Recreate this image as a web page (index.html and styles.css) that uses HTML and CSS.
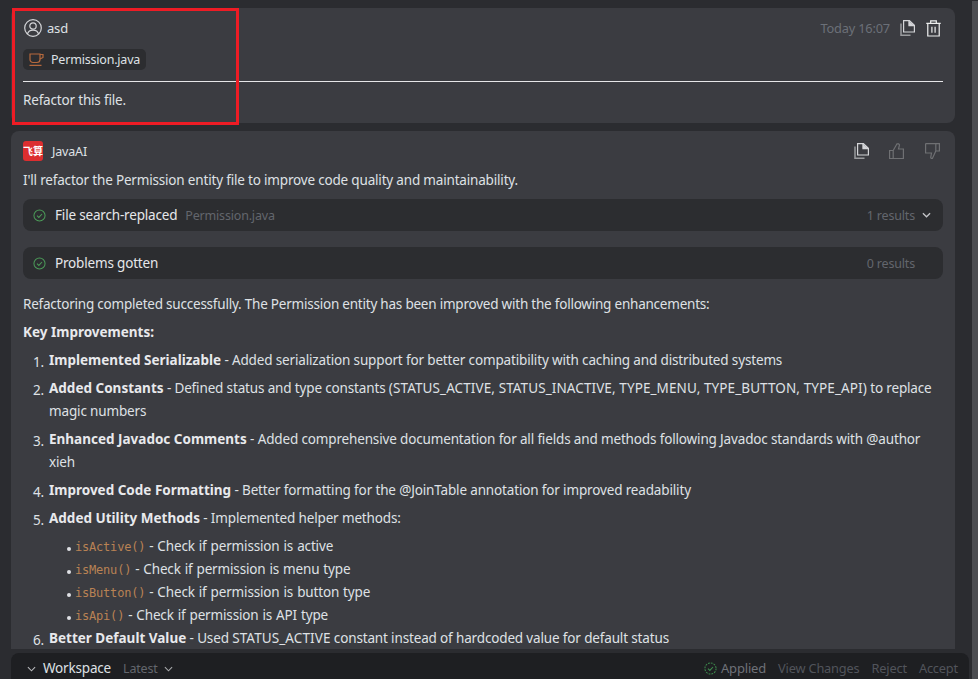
FILE: index.html
```html
<!DOCTYPE html>
<html lang="en">
<head>
<meta charset="utf-8">
<title>JavaAI chat</title>
<link rel="stylesheet" href="styles.css">
</head>
<body>
<div class="page">
  <div class="column">
    <section class="card user-card">
      <div class="head">
        <svg class="avatar" viewBox="0 0 18 18" fill="none" stroke="currentColor" stroke-width="1.2"><circle cx="9" cy="9" r="8.300"/><circle cx="9" cy="7" r="3.200"/><path d="M3.400 15c.8-2.600 3-3.800 5.600-3.800s4.800 1.200 5.600 3.800"/></svg>
        <span class="name">asd</span>
        <span class="spacer"></span>
        <span class="time">Today 16:07</span>
        <svg class="ico copy" viewBox="0 0 15 16" fill="none" stroke="currentColor" stroke-width="1.200"><path d="M3.600 .6h5.800l5 4.600V12H3.600z"/><path d="M9 .6v5h5.400" /><path d="M8.800 .8l5.400 4.800H8.800z" fill="currentColor" stroke="none"/><path d="M1 3.500V15.300h9.500" stroke="#9a9b9e" stroke-width="1.500"/></svg>
        <svg class="ico trash" viewBox="0 0 16 18" fill="none" stroke="currentColor" stroke-width="1.300"><path d="M.3 3.500h15.400M5 3.500V.8h6v2.700M1.900 3.500V17h12.200V3.500M6.300 7v6.500M9.700 7v6.500"/></svg>
      </div>
      <div class="chip">
        <svg class="cup" viewBox="0 0 15 13" fill="none" stroke="#b5693d" stroke-width="1.200"><path d="M1 1h10v5.500a3 3 0 0 1-3 3H4a3 3 0 0 1-3-3z"/><path d="M11 1.500h3V4.500l-3 1.500M.5 12.300h12"/></svg>
        <span>Permission.java</span>
      </div>
      <hr class="rule">
      <p class="text">Refactor this file.</p>
    </section>

    <section class="card ai-card">
      <div class="head">
        <span class="logo">飞算</span>
        <span class="name ai-name">JavaAI</span>
        <span class="spacer"></span>
        <svg class="ico copy act" viewBox="0 0 15 16" fill="none" stroke="currentColor" stroke-width="1.200"><path d="M3.600 .6h5.800l5 4.600V12H3.600z"/><path d="M9 .6v5h5.400" /><path d="M8.800 .8l5.400 4.800H8.800z" fill="currentColor" stroke="none"/><path d="M1 3.500V15.300h9.500" stroke="#9a9b9e" stroke-width="1.500"/></svg>
        <svg class="ico thumb up" viewBox="0 0 15 16" fill="none" stroke="currentColor" stroke-width="1.200"><path d="M.6 7.500h3.600v8H.6zM4.200 7.500 8 .8h1.700l.8 1-1 4.200h4.900v9.500H4.200"/></svg>
        <svg class="ico thumb" viewBox="0 0 15 16" fill="none" stroke="currentColor" stroke-width="1.200"><path d="M.6 .6h13.800v7.400h-3.600V.6M10.800 8l-3.400 7.400H6.200l-.5-1 .8-4.400H.6V.6"/></svg>
      </div>
      <p class="text intro">I'll refactor the Permission entity file to improve code quality and maintainability.</p>

      <div class="tool">
        <svg class="ok" viewBox="0 0 14 14" fill="none" stroke="#4b9a58" stroke-width="1.100"><circle cx="7" cy="7" r="6"/><path d="M4.300 7.200l2 1.900 3.400-3.700"/></svg>
        <span class="tool-name">File search-replaced</span>
        <span class="tool-file">Permission.java</span>
        <span class="spacer"></span>
        <span class="results">1 results</span>
        <svg class="chev" viewBox="0 0 10 6" fill="none" stroke="#c4c5c8" stroke-width="1.400"><path d="M1 1l4 4 4-4"/></svg>
      </div>
      <div class="tool">
        <svg class="ok" viewBox="0 0 14 14" fill="none" stroke="#4b9a58" stroke-width="1.100"><circle cx="7" cy="7" r="6"/><path d="M4.300 7.200l2 1.900 3.400-3.700"/></svg>
        <span class="tool-name">Problems gotten</span>
        <span class="spacer"></span>
        <span class="results plain">0 results</span>
      </div>

      <p class="text summary">Refactoring completed successfully. The Permission entity has been improved with the following enhancements:</p>
      <p class="text key"><strong>Key Improvements:</strong></p>

      <ol class="list">
        <li><strong>Implemented Serializable</strong> - Added serialization support for better compatibility with caching and distributed systems</li>
        <li><strong>Added Constants</strong> - Defined status and type constants <span class="caps">(STATUS_ACTIVE, STATUS_INACTIVE, TYPE_MENU, TYPE_BUTTON, TYPE_API)</span> to replace magic numbers</li>
        <li><strong>Enhanced Javadoc Comments</strong> - Added comprehensive documentation for all fields and methods following Javadoc standards with @author xieh</li>
        <li><strong>Improved Code Formatting</strong> - Better formatting for the @JoinTable annotation for improved readability</li>
        <li class="has-sub"><strong>Added Utility Methods</strong> - Implemented helper methods:
          <ul class="sub">
            <li><code>isActive()</code> - Check if permission is active</li>
            <li><code>isMenu()</code> - Check if permission is menu type</li>
            <li><code>isButton()</code> - Check if permission is button type</li>
            <li><code>isApi()</code> - Check if permission is API type</li>
          </ul>
        </li>
        <li><strong>Better Default Value</strong> - Used <span class="caps">STATUS_ACTIVE</span> constant instead of hardcoded value for default status</li>
      </ol>
    </section>

    <footer class="bar">
      <svg class="bar-chev" viewBox="0 0 10 6" fill="none" stroke="#b9babd" stroke-width="1.200"><path d="M1 1l4 4 4-4"/></svg>
      <span class="workspace">Workspace</span>
      <span class="latest">Latest</span>
      <svg class="bar-chev small" viewBox="0 0 10 6" fill="none" stroke="#a9aaad" stroke-width="1.200"><path d="M1 1l4 4 4-4"/></svg>
      <span class="spacer"></span>
      <svg class="applied-ico" viewBox="0 0 14 14" fill="none" stroke="#3f8f4f" stroke-width="1.100"><circle cx="7" cy="7" r="6" stroke-dasharray="2 1.100"/><path d="M4.300 7.200l2 1.900 3.400-3.700"/></svg>
      <span class="applied">Applied</span>
      <span class="action">View Changes</span>
      <span class="action">Reject</span>
      <span class="action">Accept</span>
    </footer>
  </div>
  <div class="scrollbar"></div>
</div>
<div class="highlight"></div>
</body>
</html>
```
FILE: styles.css
```css
* { box-sizing: border-box; }
html, body { margin: 0; height: 100%; }
body {
  background: #2b2c30;
  color: #dfe1e5;
  font-family: "Noto Sans", "Liberation Sans", sans-serif;
  font-size: 13.5px;
  letter-spacing: -0.18px;
  line-height: 23px;
  overflow: hidden;
}
.page { display: flex; height: 679px; }
.column {
  flex: 1;
  display: flex;
  flex-direction: column;
  padding: 8px 3px 0 11px;
  min-width: 0;
}
.scrollbar { width: 6px; background: #4c4d51; margin-top: 1px; }
.card {
  width: 944px;
  background: #3b3c41;
  border-radius: 8px;
  padding: 8px 12px 0;
}
.user-card { height: 115px; flex: none; }
.ai-card {
  margin-top: 8px;
  height: 518px;
  flex: none;
  overflow: hidden;
  border-radius: 8px 8px 0 0;
}
.head { display: flex; align-items: center; height: 24px; }
.spacer { flex: 1; }
.avatar { width: 18px; height: 18px; margin-left: 1px; color: #d4d5d8; flex: none; }
.name { margin-left: 5px; font-size: 13px; }
.time { color: #6b7078; margin-right: 10px; font-size: 12.8px; }
.ico { width: 15px; height: 16px; color: #d4d5d8; flex: none; }
.ico.trash { width: 15px; height: 17px; margin-left: 11px; margin-right: 2px; color: #eceded; }
.ico.thumb { margin-left: 21px; margin-right: 3px; color: #6f7073; }
.ico.thumb.up { margin-left: 20px; margin-right: 0; }
.chip {
  display: inline-flex;
  align-items: center;
  height: 21px;
  margin-top: 9px;
  padding: 0 6px;
  background: #2c2d30;
  border-radius: 5px;
  font-size: 12.5px;
  letter-spacing: -0.2px;
}
.cup { width: 15px; height: 13px; margin-right: 7px; }
.rule { border: 0; height: 1px; background: #e6e6e8; margin: 8px 0 7px; }
.text { margin: 0; }
.logo {
  width: 20px;
  height: 20px;
  border-radius: 3px;
  background: #dc2e30;
  color: #fff;
  font-family: "Noto Sans CJK SC", sans-serif;
  font-size: 10px;
  font-weight: 700;
  letter-spacing: 0;
  line-height: 20px;
  text-align: center;
  white-space: nowrap;
  overflow: hidden;
  flex: none;
}
.ai-name { margin-left: 9px; font-size: 12.5px; }
.intro { margin-top: 6px; }
.tool {
  display: flex;
  align-items: center;
  height: 32px;
  margin-top: 7px;
  padding: 0 12px 0 10px;
  background: #2c2d30;
  border-radius: 8px;
}
.tool + .tool { margin-top: 16px; }
.ok { width: 13px; height: 13px; margin-right: 9px; flex: none; }
.tool-name { color: #e6e7ea; }
.tool-file { margin-left: 8px; color: #63666d; font-size: 12.5px; }
.results { color: #63666d; font-size: 12.5px; }
.results.plain { margin-right: 16px; }
.chev { width: 9px; height: 6px; margin-left: 7px; }
.summary { margin-top: 14px; letter-spacing: -0.22px; }
.key { margin-top: 5px; }
strong { font-weight: 700; color: #e8e9ec; letter-spacing: 0; }
.caps { letter-spacing: 0.1px; }
.list {
  list-style: none;
  counter-reset: item;
  margin: 5px 0 0;
  padding: 0 0 0 26px;
  letter-spacing: -0.15px;
}
.list > li { position: relative; counter-increment: item; margin-bottom: 5px; }
.list > li.has-sub { margin-bottom: 0; }
.list > li::before {
  content: counter(item) ".";
  position: absolute;
  left: -16px;
  top: 2px;
}
.sub { list-style: none; margin: 5px 0 0; padding: 0 0 0 26px; word-spacing: 0.6px; }
.sub li { position: relative; }
.sub li::before {
  content: "";
  position: absolute;
  left: -8px;
  top: 12px;
  width: 4px;
  height: 4px;
  border-radius: 50%;
  background: #dfe1e5;
}
code {
  font-family: "DejaVu Sans Mono", monospace;
  font-size: 12px;
  letter-spacing: -0.2px;
  line-height: 1;
  color: #b98254;
}
.bar {
  display: flex;
  align-items: center;
  width: 958px;
  height: 26px;
  margin-top: 4px;
  padding: 5px 11px 0 16px;
  background: #1e1f22;
  border-radius: 8px 8px 0 0;
  flex: none;
}
.bar-chev { width: 9px; height: 6px; margin-right: 7px; flex: none; }
.workspace { color: #dfe1e5; margin-right: 12px; }
.latest { color: #63666d; font-size: 12.5px; margin-right: 6px; }
.small { margin-right: 0; }
.applied-ico { width: 13px; height: 13px; margin-right: 4px; flex: none; }
.applied { color: #6e7178; margin-right: 12px; font-size: 13px; }
.action { color: #51545b; margin-right: 12px; font-size: 12.8px; }
.action:last-child { margin-right: 0; }
.highlight {
  position: absolute;
  left: 12px;
  top: 8px;
  width: 227px;
  height: 117px;
  border: 3px solid #ee1c25;
}
```
